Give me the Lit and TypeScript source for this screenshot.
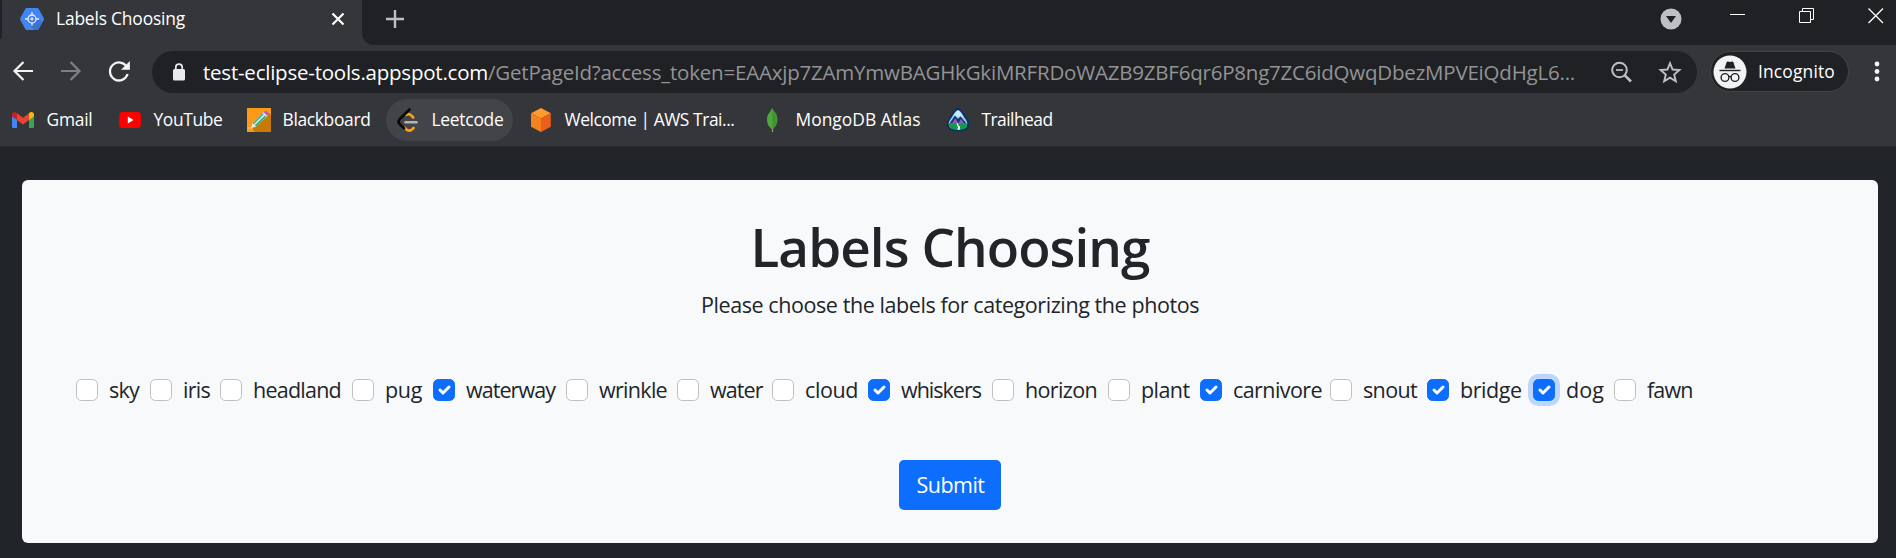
import { LitElement, html, css, svg } from "lit";
import { classMap } from "lit/directives/class-map.js";

/** One line of text whose tracking is tuned so that it fills a given width. */
class FitText extends LitElement {
  static properties = { text: { type: String }, w: { type: Number } };
  declare text: string;
  declare w: number;
  static styles = css`
    :host { display: block; white-space: pre; line-height: 1; }
    .t { display: inline-block; }
  `;
  render() {
    return html`<span class="t">${this.text}</span>`;
  }
  updated() {
    const el = this.renderRoot.querySelector(".t") as HTMLElement;
    el.style.letterSpacing = "0px";
    const natural = el.getBoundingClientRect().width;
    el.style.letterSpacing = `${(this.w - natural) / this.text.length}px`;
  }
}
customElements.define("fit-text", FitText);

const fit = (text: string, w: number) => html`<fit-text .text=${text} .w=${w}></fit-text>`;

const gmail = svg`<svg width="24" height="24" viewBox="0 0 24 24">
  <path d="M1 6v12.500A1.500 1.500 0 0 0 2.500 20H6V10z" fill="#4285f4"/>
  <path d="M23 6v12.500A1.500 1.500 0 0 1 21.500 20H18V10z" fill="#34a853"/>
  <path d="M6 5.200V12l6 4.500 6-4.500V5.200l-6 4.600z" fill="#ea4335"/>
  <path d="M1 6.500V8.200L6 12V5.200L5 4.400C3.300 3.200 1 4.400 1 6.500z" fill="#c5221f"/>
  <path d="M23 6.500V8.200L18 12V5.200l1-.8C20.700 3.200 23 4.400 23 6.500z" fill="#fbbc04"/></svg>`;
const youtube = svg`<svg width="24" height="24" viewBox="0 0 24 24">
  <rect x="1.300" y="4" width="21.600" height="16" rx="3.500" fill="#f00"/><path d="M9.800 8.600v6.800L15.500 12z" fill="#fff"/></svg>`;
const blackboard = svg`<svg width="24" height="24" viewBox="0 0 24 24">
  <rect width="24" height="24" fill="#fb9a17"/><path d="M22 5L24 7V24H8L4 19z" fill="#c77a05"/>
  <path d="M0 20H6" stroke="#f7c98a" stroke-width="1"/>
  <path d="M4 20L5.500 15.200 17 3.700 21 7.300 9 18.800z" fill="#f4ead8"/>
  <path d="M6.200 15.800L16.500 5.400" stroke="#2ab5d8" stroke-width="1.800"/>
  <path d="M8.500 18L19 7.600" stroke="#2fb56a" stroke-width="1.800"/>
  <path d="M16.500 4.200L18 3Q19 2.500 20 3.500L21.300 4.800Q22 5.700 21.200 6.500L20.200 7.700z" fill="#b15cc7"/>
  <path d="M15.600 5L19.300 8.500" stroke="#e9e2ec" stroke-width="1"/></svg>`;
const leetcode = svg`<svg width="24" height="24" viewBox="0 0 24 24" fill="none" stroke-linecap="round">
  <path d="M8.500 19.500Q12.500 25 16.700 20.800L17.500 20" stroke="#ffa116" stroke-width="2.600"/>
  <path d="M10 6.800Q13 5 15.500 7.700L17.200 9.500" stroke="#ffa116" stroke-width="2.600"/>
  <path d="M13.500 1.500L3.400 11.500Q1.700 13.700 3.400 15.700L8 20.300" stroke="#070706" stroke-width="2.700"/>
  <path d="M9.500 14.200H20.500" stroke="#b3b3b3" stroke-width="2.500"/></svg>`;
const aws = svg`<svg width="24" height="24" viewBox="0 0 24 24">
  <path d="M12 0L21.800 5.200 12 10.500 2 5.200z" fill="#ff9b2f"/><path d="M2 5.200L12 10.500V24L2 18.800z" fill="#f58220"/>
  <path d="M21.800 5.200L12 10.500V24L21.800 18.800z" fill="#ea5f1c"/></svg>`;
const mongo = svg`<svg width="24" height="24" viewBox="0 0 24 24">
  <path d="M12.500 20V24" stroke="#9aa08f" stroke-width="1.200"/>
  <path d="M12 0C13.500 3 17.400 5.500 17.400 11.500 17.400 16.500 14.500 19.500 12.300 21.500 9.500 19.500 7 16.500 7 11.500 7 5.800 11 3.500 12 0z" fill="#4fa83d"/>
  <path d="M12 0C13.500 3 17.400 5.500 17.400 11.500 17.400 16.500 14.500 19.500 12.300 21.500z" fill="#419433"/></svg>`;
const trailhead = svg`<svg width="24" height="24" viewBox="0 0 24 24">
  <path d="M12 1C16 2 17 6 19.500 9.500 22 13 23 14.500 21.700 19 20 22 16 22.500 12 22.500S4 22 2.300 19C1 14.500 2 13 4.500 9.500 7 6 8 2 12 1z" fill="#8fd3f4" stroke="#0b2f66" stroke-width="1.900"/>
  <path d="M12 2.500C14 3 15.500 6 17 9L7.500 8.500C9 6 10 3 12 2.500z" fill="#c6eafa"/>
  <path d="M3.500 15.500L9 7.500 12 11 14.500 8.300 20.500 15.500z" fill="#1f2f68"/>
  <path d="M6 15.500L9.300 10 12.300 15.500zM12.300 15.500L15 10.700 18.300 15.500z" fill="#8f5cc0"/>
  <path d="M2.600 15.300H21.400L20.700 19C18.500 21.500 15 21.600 12 21.600S5.500 21.500 3.300 19z" fill="#159a48"/>
  <path d="M10.500 15.500H12.500L12 17 14 18.700 13.700 21.700H11.500L12 19.300z" fill="#fff"/></svg>`;

const bookmarks = [
  { icon: gmail, text: "Gmail", w: 46, col: 107 },
  { icon: youtube, text: "YouTube", w: 69, col: 129 },
  { icon: blackboard, text: "Blackboard", w: 88, col: 149 },
  { icon: leetcode, text: "Leetcode", w: 72, col: 133, hot: true },
  { icon: aws, text: "Welcome | AWS Trai...", w: 170, col: 231 },
  { icon: mongo, text: "MongoDB Atlas", w: 125, col: 186 },
  { icon: trailhead, text: "Trailhead", w: 71, col: 120 },
];

const labels: { t: string; w: number; col: number; on?: boolean; focus?: boolean }[] = [
  { t: "sky", w: 30, col: 74 },
  { t: "iris", w: 27, col: 70 },
  { t: "headland", w: 88, col: 132 },
  { t: "pug", w: 37, col: 81 },
  { t: "waterway", w: 89, col: 133, on: true },
  { t: "wrinkle", w: 68, col: 111 },
  { t: "water", w: 52.5, col: 95 },
  { t: "cloud", w: 53, col: 96 },
  { t: "whiskers", w: 80, col: 124, on: true },
  { t: "horizon", w: 72, col: 116 },
  { t: "plant", w: 48.5, col: 92 },
  { t: "carnivore", w: 89, col: 130, on: true },
  { t: "snout", w: 54, col: 97 },
  { t: "bridge", w: 61.5, col: 106, on: true },
  { t: "dog", w: 38, col: 81, on: true, focus: true },
  { t: "fawn", w: 45.5, col: 90 },
];

class AppRoot extends LitElement {
  static styles = css`
    :host { display: flex; flex-direction: column; width: 1896px; height: 558px; overflow: hidden; background: #212529;
      font-family: "Open Sans", "Noto Sans", sans-serif; }
    * { box-sizing: border-box; }
    svg { display: block; flex: none; }
    .tabs { height: 45px; display: flex; background: #35363a; color: #fff; font-size: 17.4px; }
    .edge { width: 2px; height: 39px; background: #202124; border-bottom-right-radius: 2px; }
    .tab { width: 360px; height: 45px; display: flex; align-items: flex-start; padding: 7px 16px 0 18px; }
    .tab fit-text { margin: 3px 0 0 12px; }
    .tab .x { margin: 4px 0 0 auto; }
    .strip { flex: 1; display: flex; background: #202124; border-bottom-left-radius: 12px; padding: 0 12px 0 24px; }
    .plus { margin-top: 10px; }
    .drop { margin: 8px 48px 0 auto; }
    .win { display: flex; gap: 53px; padding-top: 8px; }
    .bar { height: 54px; display: flex; align-items: flex-start; padding-top: 6px; background: #35363a; color: #fff; }
    .nav { display: flex; gap: 24px; padding: 8px 0 0 11px; width: 152px; flex: none; }
    .omni { width: 1545px; flex: none; height: 42px; border-radius: 21px; background: #202124; display: flex; align-items: flex-start; font-size: 20.5px; }
    .lock { margin: 11px 0 0 20px; }
    .url { display: flex; flex: none; margin: 11px 0 0 17px; width: 1391px; }
    .path { color: #929496; }
    .omni .z { margin: 9px 0 0 16px; }
    .omni .star { margin: 9px 0 0 24px; }
    .incog { width: 139px; height: 41px; margin-left: 13px; border-radius: 21px; border: 1.500px solid #424347; background: #202124;
      display: flex; align-items: flex-start; font-size: 17.4px; padding: 3px 0 0 2px; }
    .incog fit-text { margin: 8px 0 0 11px; }
    .dots { margin: 10px 0 0 25px; }
    .marks { height: 48px; display: flex; background: #35363a; border-bottom: 1px solid #2b2c30; color: #fff; font-size: 17.4px; padding-left: 11px; }
    .mark { display: flex; align-items: flex-start; padding-top: 9px; }
    .mark fit-text { margin: 2.500px 0 0 11.500px; }
    .hot { height: 42px; background: #434448; border-radius: 21px; margin-left: -10px; padding-left: 10px; margin-right: 16px; }
    .page { flex: 1; padding: 33px 18px 0 22px; color: #212529; font-size: 21.5px; }
    .card { height: 362.700px; border-radius: 6px; background: #f8f9fb; display: flex; flex-direction: column; align-items: center; }
    h1 { margin: 40px 0 0; font: 600 53px/1 "Open Sans", sans-serif; height: 53px; }
    .sub { margin-top: 21px; height: 22px; }
    .row { align-self: stretch; display: flex; margin-top: 63px; padding-left: 54px; height: 22px; }
    .item { display: flex; flex: none; }
    .item fit-text { margin: 0 0 0 11px; }
    .box { width: 22px; height: 22px; flex: none; border: 1px solid #bfbfbf; border-radius: 5.400px; background: #fff; }
    .on { background: #0d6efd; border-color: #0d6efd; }
    .focus { box-shadow: 0 0 0 5px #bcd7fb; }
    .btn { margin: 59px 0 0; width: 102px; height: 50px; border: 0; border-radius: 5px; background: #0d6efd; color: #fff; font: inherit;
      padding: 0 0 0 1px; display: flex; justify-content: center; align-items: center; }
  `;

  render() {
    return html`
      <div class="tabs">
        <div class="edge"></div>
        <div class="tab">
          <svg width="24" height="24" viewBox="0 0 24 24">
            <path d="M6.800 1h10.400q1 0 1.500.9l5 9.200q.5.900 0 1.800l-5 9.200q-.5.900-1.500.9H6.800q-1 0-1.500-.9l-5-9.200q-.5-.900 0-1.800l5-9.200Q5.800 1 6.800 1z" fill="#4285f4"/>
            <path d="M15.500 8.500L22 15 18.500 22q-.500.900-1.500.9H14L8.500 15.500z" fill="#3a72d8"/>
            <circle cx="12" cy="12" r="4" fill="none" stroke="#e8f0fe" stroke-width="1.300"/><circle cx="12" cy="12" r="1.700" fill="#c6dafc"/>
            <path d="M12 5v3M12 16v2.500M5 12h3M16 12h3" stroke="#e8f0fe" stroke-width="1.300"/>
          </svg>
          ${fit("Labels Choosing", 129)}
          <svg class="x" width="16" height="16" viewBox="0 0 16 16"><path d="M2.500 2.500l11 11M13.500 2.500l-11 11" stroke="#fff" stroke-width="2.200"/></svg>
        </div>
        <div class="strip">
          <svg class="plus" width="18" height="18" viewBox="0 0 18 18"><path d="M9 0v18M0 9h18" stroke="#bdc1c6" stroke-width="2.400"/></svg>
          <svg class="drop" width="22" height="22" viewBox="0 0 22 22"><circle cx="11" cy="11" r="10.500" fill="#bdc1c6"/><path d="M6 8h10l-5 7z" fill="#202124"/></svg>
          <div class="win">
            <svg width="16" height="16" viewBox="0 0 16 16"><path d="M0 6.500h15" stroke="#fff"/></svg>
            <svg width="16" height="16" viewBox="0 0 16 16" fill="none" stroke="#fff"><path d="M.5 3.500h11v11H.5zM3.500 3.500V.5h11v11h-3"/></svg>
            <svg width="16" height="16" viewBox="0 0 16 16"><path d="M.5.500l14.500 14.500M15 .500L.5 15" stroke="#fff" stroke-width="1.300"/></svg>
          </div>
        </div>
      </div>
      <div class="bar">
        <div class="nav">
          <svg width="24" height="24" viewBox="0 0 24 24" fill="none" stroke="#f1f3f4" stroke-width="2.200"><path d="M22 12H3.500M12.500 3L3.500 12l9 9"/></svg>
          <svg width="24" height="24" viewBox="0 0 24 24" fill="none" stroke="#7f8083" stroke-width="2.200"><path d="M2 12h18.500M11.500 3l9 9-9 9"/></svg>
          <svg width="24" height="24" viewBox="0 0 24 24"><path d="M19.800 8A9 9 0 1 0 20.600 15" fill="none" stroke="#f1f3f4" stroke-width="2.300"/><path d="M22.900 2v8.800h-8.800z" fill="#f1f3f4"/></svg>
        </div>
        <div class="omni">
          <svg class="lock" width="14" height="20" viewBox="0 0 14 20"><rect x="1" y="7" width="12" height="11.500" rx="1.500" fill="#e8eaed"/><path d="M3.800 8V5.300a3.200 3.200 0 0 1 6.400 0V8" fill="none" stroke="#e8eaed" stroke-width="1.700"/></svg>
          <div class="url">
            ${fit("test-eclipse-tools.appspot.com", 285)}
            <div class="path">${fit("/GetPageId?access_token=EAAxjp7ZAmYmwBAGHkGkiMRFRDoWAZB9ZBF6qr6P8ng7ZC6idQwqDbezMPVEiQdHgL6...", 1087)}</div>
          </div>
          <svg class="z" width="24" height="24" viewBox="0 0 24 24" fill="none" stroke="#bdc1c6"><circle cx="9.500" cy="10" r="7.300" stroke-width="2"/><path d="M6 10h7" stroke-width="1.700"/><path d="M14.800 15.300l6.200 6.200" stroke-width="2.600"/></svg>
          <svg class="star" width="24" height="24" viewBox="0 0 24 24"><path d="M12 3.200l2.600 6.300 6.800.6-5.200 4.400 1.600 6.700L12 17.600l-5.800 3.600 1.600-6.700-5.200-4.400 6.800-.6z" fill="none" stroke="#bdc1c6" stroke-width="1.900"/></svg>
        </div>
        <div class="incog">
          <svg width="34" height="34" viewBox="0 0 34 34"><circle cx="17" cy="17" r="16.500" fill="#f1f3f4"/>
            <path d="M11.500 13.500l2-6q.4-1.200 1.600-.9l1.900.5 1.900-.5q1.200-.3 1.600.9l2 6z" fill="#202124"/><path d="M6.500 15.500h21" stroke="#202124" stroke-width="1.400"/>
            <g fill="none" stroke="#202124" stroke-width="1.400"><circle cx="12" cy="22.500" r="3.900"/><circle cx="22" cy="22.500" r="3.900"/><path d="M15.800 21.800q1.200-.9 2.400 0"/></g></svg>
          ${fit("Incognito", 77)}
        </div>
        <svg class="dots" width="6" height="22" viewBox="0 0 6 22" fill="#f1f3f4"><circle cx="3" cy="3" r="2.400"/><circle cx="3" cy="10.500" r="2.400"/><circle cx="3" cy="18" r="2.400"/></svg>
      </div>
      <div class="marks">
        ${bookmarks.map(
          (b) => html`<div style="width:${b.col}px"><div class=${classMap({ mark: true, hot: !!b.hot })}>${b.icon}${fit(b.text, b.w)}</div></div>`
        )}
      </div>
      <div class="page">
        <div class="card">
          <h1>${fit("Labels Choosing", 399)}</h1>
          <div class="sub">${fit("Please choose the labels for categorizing the photos", 498)}</div>
          <div class="row">
            ${labels.map(
              (l) => html`<div class="item" style="width:${l.col}px">
                <div class=${classMap({ box: true, on: !!l.on, focus: !!l.focus })}>
                  ${l.on ? html`<svg width="20" height="20" viewBox="0 0 20 20"><path fill="none" stroke="#fff" stroke-linecap="round" stroke-linejoin="round" stroke-width="3" d="M6 10l3 3 6-6"/></svg>` : ""}
                </div>
                ${fit(l.t, l.w)}
              </div>`
            )}
          </div>
          <button class="btn">${fit("Submit", 68)}</button>
        </div>
      </div>
    `;
  }
}
customElements.define("app-root", AppRoot);
